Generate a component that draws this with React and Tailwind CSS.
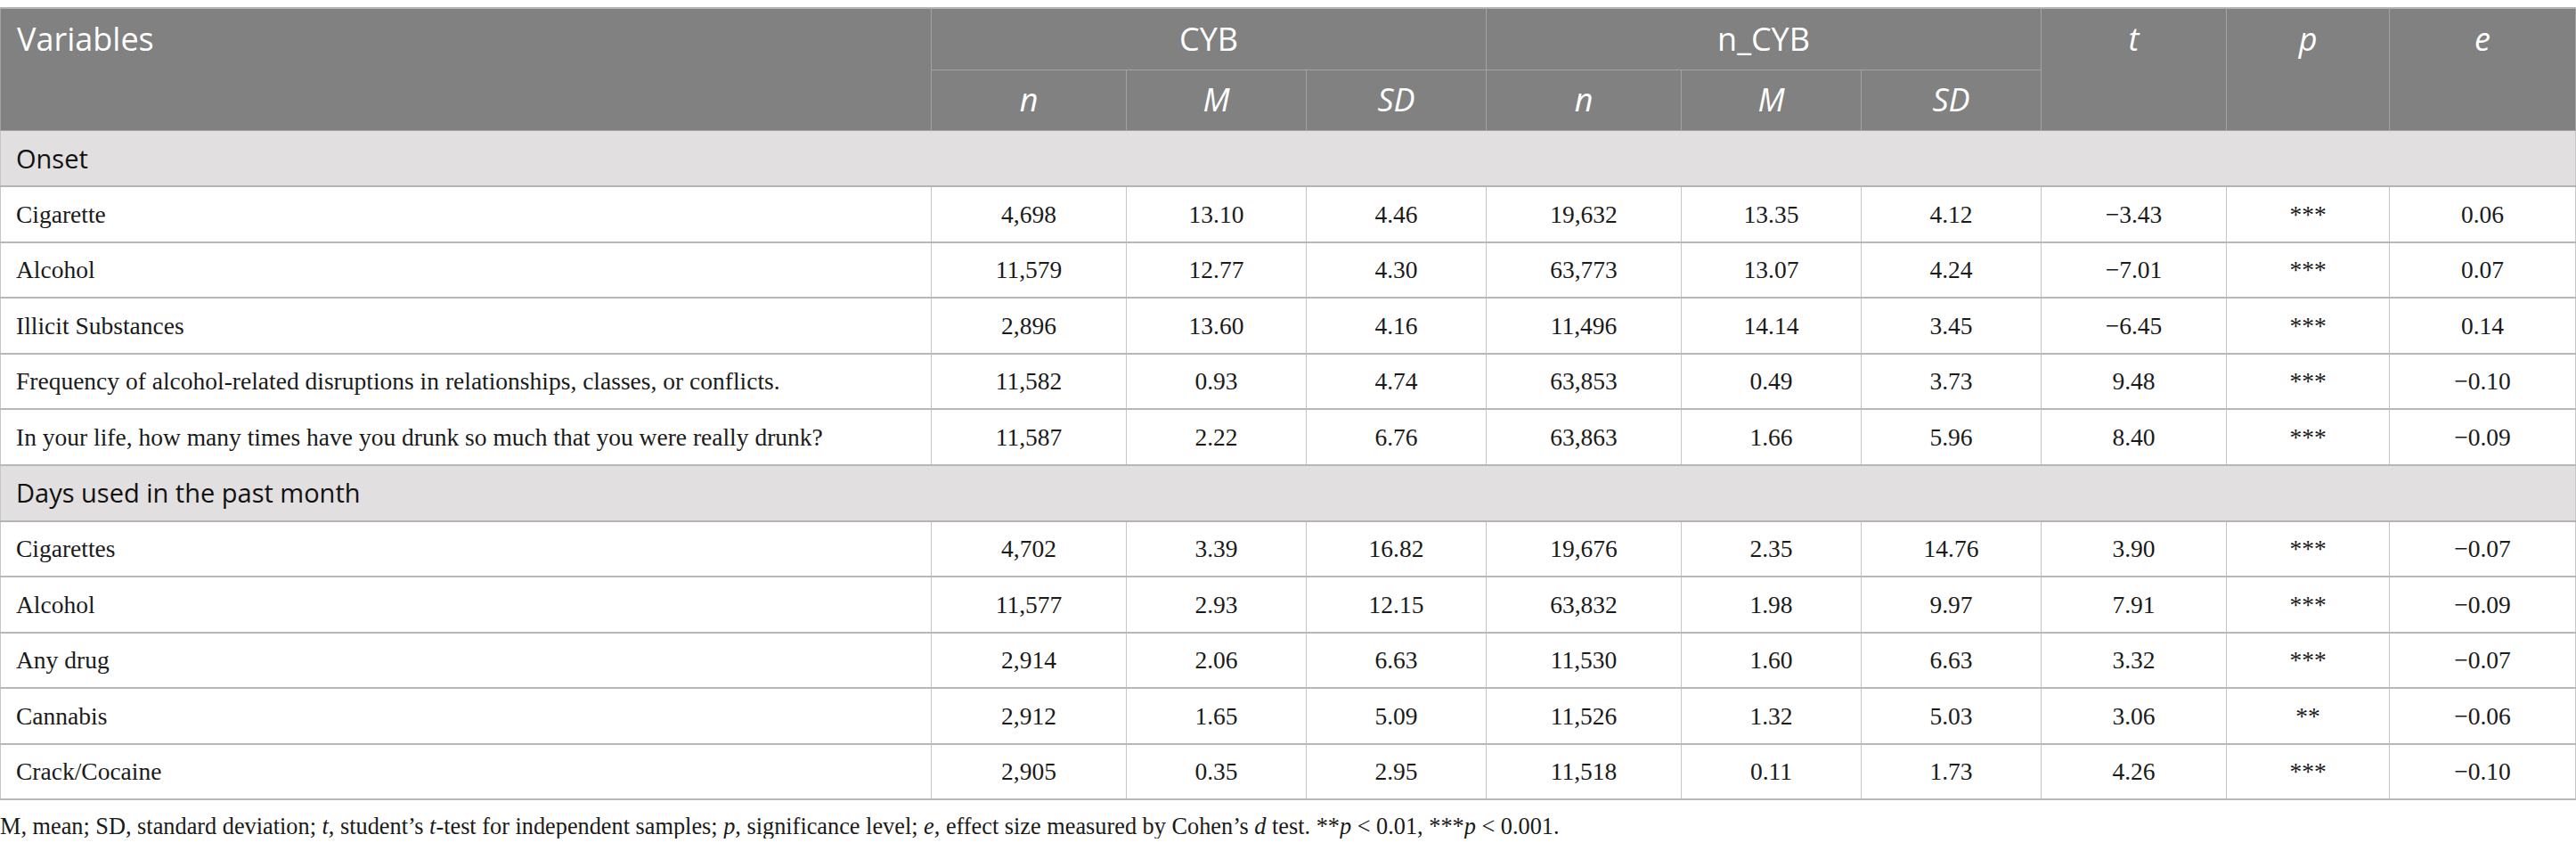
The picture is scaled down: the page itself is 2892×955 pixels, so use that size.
const sections = [
  {
    title: 'Onset',
    rows: [
      ['Cigarette', '4,698', '13.10', '4.46', '19,632', '13.35', '4.12', '−3.43', '***', '0.06'],
      ['Alcohol', '11,579', '12.77', '4.30', '63,773', '13.07', '4.24', '−7.01', '***', '0.07'],
      ['Illicit Substances', '2,896', '13.60', '4.16', '11,496', '14.14', '3.45', '−6.45', '***', '0.14'],
      ['Frequency of alcohol-related disruptions in relationships, classes, or conflicts.', '11,582', '0.93', '4.74', '63,853', '0.49', '3.73', '9.48', '***', '−0.10'],
      ['In your life, how many times have you drunk so much that you were really drunk?', '11,587', '2.22', '6.76', '63,863', '1.66', '5.96', '8.40', '***', '−0.09'],
    ],
  },
  {
    title: 'Days used in the past month',
    rows: [
      ['Cigarettes', '4,702', '3.39', '16.82', '19,676', '2.35', '14.76', '3.90', '***', '−0.07'],
      ['Alcohol', '11,577', '2.93', '12.15', '63,832', '1.98', '9.97', '7.91', '***', '−0.09'],
      ['Any drug', '2,914', '2.06', '6.63', '11,530', '1.60', '6.63', '3.32', '***', '−0.07'],
      ['Cannabis', '2,912', '1.65', '5.09', '11,526', '1.32', '5.03', '3.06', '**', '−0.06'],
      ['Crack/Cocaine', '2,905', '0.35', '2.95', '11,518', '0.11', '1.73', '4.26', '***', '−0.10'],
    ],
  },
];

const widths = [1045, 219, 202, 202, 219, 202, 202, 208, 183, 209];

const hcell = 'border border-[#a3a3a3] text-white font-normal';
const bcell = 'border-x border-x-[#c6c6c6] border-b-2 border-b-[#b8b8b8] text-center text-[#1a1a1a]';

export default function App() {
  return (
    <div className="w-[2892px] bg-white pt-2">
      <table className="w-[2892px] table-fixed border-collapse">
        <colgroup>
          {widths.map((w, i) => (
            <col key={i} style={{ width: w }} />
          ))}
        </colgroup>
        <thead className="bg-[#808180] font-['Open_Sans',sans-serif] text-[36px] leading-none">
          <tr className="h-[69px]">
            <th rowSpan={2} className={`${hcell} border-t-2 border-t-[#b3b3b3] text-left align-top pl-[18px] pt-[16px]`}>Variables</th>
            <th colSpan={3} className={`${hcell} border-t-2 border-t-[#b3b3b3] text-center align-middle`}>CYB</th>
            <th colSpan={3} className={`${hcell} border-t-2 border-t-[#b3b3b3] text-center align-middle`}>n_CYB</th>
            <th rowSpan={2} className={`${hcell} border-t-2 border-t-[#b3b3b3] text-center align-top pt-[16px] italic`}>t</th>
            <th rowSpan={2} className={`${hcell} border-t-2 border-t-[#b3b3b3] text-center align-top pt-[16px] italic`}>p</th>
            <th rowSpan={2} className={`${hcell} border-t-2 border-t-[#b3b3b3] text-center align-top pt-[16px] italic`}>e</th>
          </tr>
          <tr className="h-[68px]">
            {['n', 'M', 'SD', 'n', 'M', 'SD'].map((h, i) => (
              <th key={i} className={`${hcell} text-center italic`}>{h}</th>
            ))}
          </tr>
        </thead>
        <tbody className="font-['Liberation_Serif',serif] text-[27.5px]">
          {sections.map((s) => (
            <>
              <tr key={s.title} className="h-[63px] bg-[#e1dfe0]">
                <td colSpan={10} className="border-x border-x-[#c6c6c6] border-b-2 border-b-[#b3b3b3] pl-[17px] font-['Open_Sans',sans-serif] text-[29px] text-[#111]">
                  {s.title}
                </td>
              </tr>
              {s.rows.map((r) => (
                <tr key={r[0] + r[1]} className="h-[62.5px]">
                  {r.map((c, i) => (
                    <td key={i} className={i === 0 ? `${bcell} !text-left pl-[17px]` : bcell}>
                      {c}
                    </td>
                  ))}
                </tr>
              ))}
            </>
          ))}
        </tbody>
      </table>
      <p className="pt-[17px] font-['Liberation_Serif',serif] text-[26.3px] text-[#1a1a1a] leading-none">
        M, mean; SD, standard deviation; <i>t</i>, student’s <i>t</i>-test for independent samples; <i>p</i>, significance level; <i>e</i>, effect size measured by Cohen’s <i>d</i> test. **<i>p</i> &lt; 0.01, ***<i>p</i> &lt; 0.001.
      </p>
    </div>
  );
}
